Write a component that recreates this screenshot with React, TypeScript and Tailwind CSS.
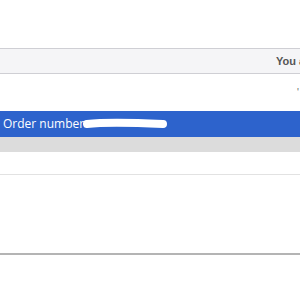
export default function App() {
  return (
    <div className="w-[300px] h-[300px] bg-white overflow-hidden relative" style={{ fontFamily: '"Liberation Sans", Arial, sans-serif' }}>
      <div className="h-[48px]" />
      <div className="h-[26px] bg-[#f5f5f7] border-t border-b border-[#cfcfd4] flex items-center pl-[276px] overflow-hidden">
        <span className="text-[11px] font-bold text-[#555] whitespace-nowrap">You are</span>
      </div>
      <div className="h-[37px] relative">
        <span className="absolute right-[1px] top-[11px] text-[10px] text-[#666]">'</span>
      </div>
      <div className="h-[26px] bg-[#2d63cc] flex items-center pl-[3px]">
        <span className="text-[12px] text-white whitespace-nowrap" style={{ fontFamily: '"Open Sans", Arial, sans-serif' }}>Order number</span>
        <svg width="86" height="12" viewBox="0 0 86 12" className="ml-[-1px]">
          <path d="M4 6 C 20 4, 60 5, 80 6" stroke="white" strokeWidth="8" strokeLinecap="round" fill="none" />
        </svg>
      </div>
      <div className="h-[15px] bg-[#dcdcdc]" />
      <div className="h-[22px]" />
      <div className="h-px bg-[#e2e2e2]" />
      <div className="h-[78px]" />
      <div className="h-[2px] bg-[#b4b4b4]" />
    </div>
  );
}
